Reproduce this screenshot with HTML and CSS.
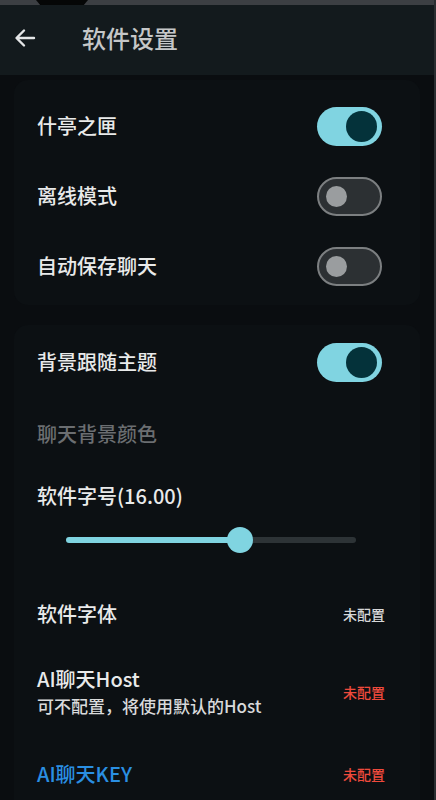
FILE: index.html
```html
<html>
<head>
   <meta charset="UTF-8">
   <title>软件设置</title>
   <link rel="stylesheet" href="styles.css">
</head>
<body>
	<div class="status"><div class="notch"></div></div>

	<div class="topbar">
		<svg class="back" width="22" height="22" viewBox="0 0 22 22">
			<path d="M20 11H3M10 3.5L2.5 11L10 18.5" fill="none" stroke="#e4e6e7" stroke-width="2.4" stroke-linecap="round" stroke-linejoin="round"/>
		</svg>
		<div class="title">软件设置</div>
	</div>

	<div class="main">
		<div class="card first">
			<div class="row">
				<div class="label">什亭之匣</div>
				<div class="switch on"><div class="knob"></div></div>
			</div>
			<div class="row">
				<div class="label">离线模式</div>
				<div class="switch"><div class="knob"></div></div>
			</div>
			<div class="row">
				<div class="label">自动保存聊天</div>
				<div class="switch"><div class="knob"></div></div>
			</div>
		</div>

		<div class="card second">
			<div class="row">
				<div class="label">背景跟随主题</div>
				<div class="switch on"><div class="knob"></div></div>
			</div>
			<div class="row color_row">
				<div class="label muted">聊天背景颜色</div>
			</div>
			<div class="size_block">
				<div class="label">软件字号(16.00)</div>
				<div class="slider">
					<div class="fill" style="width: 60%;"></div>
					<div class="thumb"></div>
					<div class="rest"></div>
				</div>
			</div>
			<div class="row font_row">
				<div class="label">软件字体</div>
				<div class="value">未配置</div>
			</div>
			<div class="row host_row">
				<div>
					<div class="label">AI聊天Host</div>
					<div class="sub">可不配置，将使用默认的Host</div>
				</div>
				<div class="value red">未配置</div>
			</div>
			<div class="row key_row">
				<div class="label blue">AI聊天KEY</div>
				<div class="value red">未配置</div>
			</div>
		</div>
	</div>
</body>
</html>
```

FILE: styles.css
```css
body{
	margin: 0;
	background: #0a0d10;
	font-family: "Noto Sans CJK SC", "Noto Sans", sans-serif;
	color: #e9eaea;
	overflow: hidden;
	height: 800px;
	border-right: 2px solid #2a2e31;
	box-sizing: border-box;
}
.status{
	height: 5px;
	background: #3c3f43;
}
.notch{
	margin-left: 36px;
	width: 52px;
	height: 5px;
	background: #050606;
	clip-path: polygon(0 0, 100% 0, 92% 100%, 8% 100%);
}
.topbar{
	height: 70px;
	background: #131a1d;
	display: flex;
	align-items: center;
	padding-left: 14px;
}
.back{
	margin-top: -4px;
}
.title{
	margin-left: 46px;
	margin-top: -6px;
	font-size: 24px;
	font-weight: 500;
	color: #c5c7c8;
}
.main{
	padding: 5px 14px 0 14px;
}
.card{
	background: #0c1013;
	border-radius: 14px;
	padding: 0 38px 0 23px;
}
.first{
	padding-top: 11px;
	padding-bottom: 4px;
}
.second{
	margin-top: 20px;
	padding-top: 2px;
	padding-bottom: 10px;
}
.row{
	height: 70px;
	display: flex;
	align-items: center;
	justify-content: space-between;
}
.color_row{
	height: 74px;
}
.label{
	font-size: 20px;
	font-weight: 500;
	line-height: 26px;
}
.muted{
	color: #6b6e71;
}
.blue{
	color: #2a8fe2;
}
.switch{
	width: 65px;
	height: 39px;
	border-radius: 20px;
	box-sizing: border-box;
	background: #2c3033;
	border: 2px solid #7c7f81;
	display: flex;
	align-items: center;
	padding-left: 7px;
}
.switch .knob{
	width: 21px;
	height: 21px;
	border-radius: 50%;
	background: #9a9d9f;
}
.switch.on{
	background: #80d4e1;
	border: none;
	justify-content: flex-end;
	padding-right: 5px;
}
.switch.on .knob{
	width: 31px;
	height: 31px;
	background: #04323a;
}
.size_block{
	padding-top: 12px;
}
.slider{
	margin: 16px 26px 0 29px;
	height: 30px;
	display: flex;
	align-items: center;
}
.fill{
	height: 6px;
	background: #80d4e1;
	border-radius: 3px 0 0 3px;
	margin-right: -13px;
}
.thumb{
	width: 26px;
	height: 26px;
	border-radius: 50%;
	background: #80d4e1;
	flex-shrink: 0;
	position: relative;
}
.rest{
	flex: 1;
	height: 6px;
	background: #2d3336;
	border-radius: 0 3px 3px 0;
	margin-left: -13px;
}
.font_row{
	margin-top: 24px;
}
.host_row{
	height: 86px;
}
.host_row .label{
	line-height: 27px;
}
.key_row{
	margin-top: 4px;
}
.sub{
	font-size: 17px;
	font-weight: 500;
	line-height: 27px;
	color: #d9dadb;
}
.value{
	font-size: 14px;
	font-weight: 500;
	color: #d6d7d8;
	margin-right: -3px;
}
.red{
	color: #ee4a3c;
}
```
